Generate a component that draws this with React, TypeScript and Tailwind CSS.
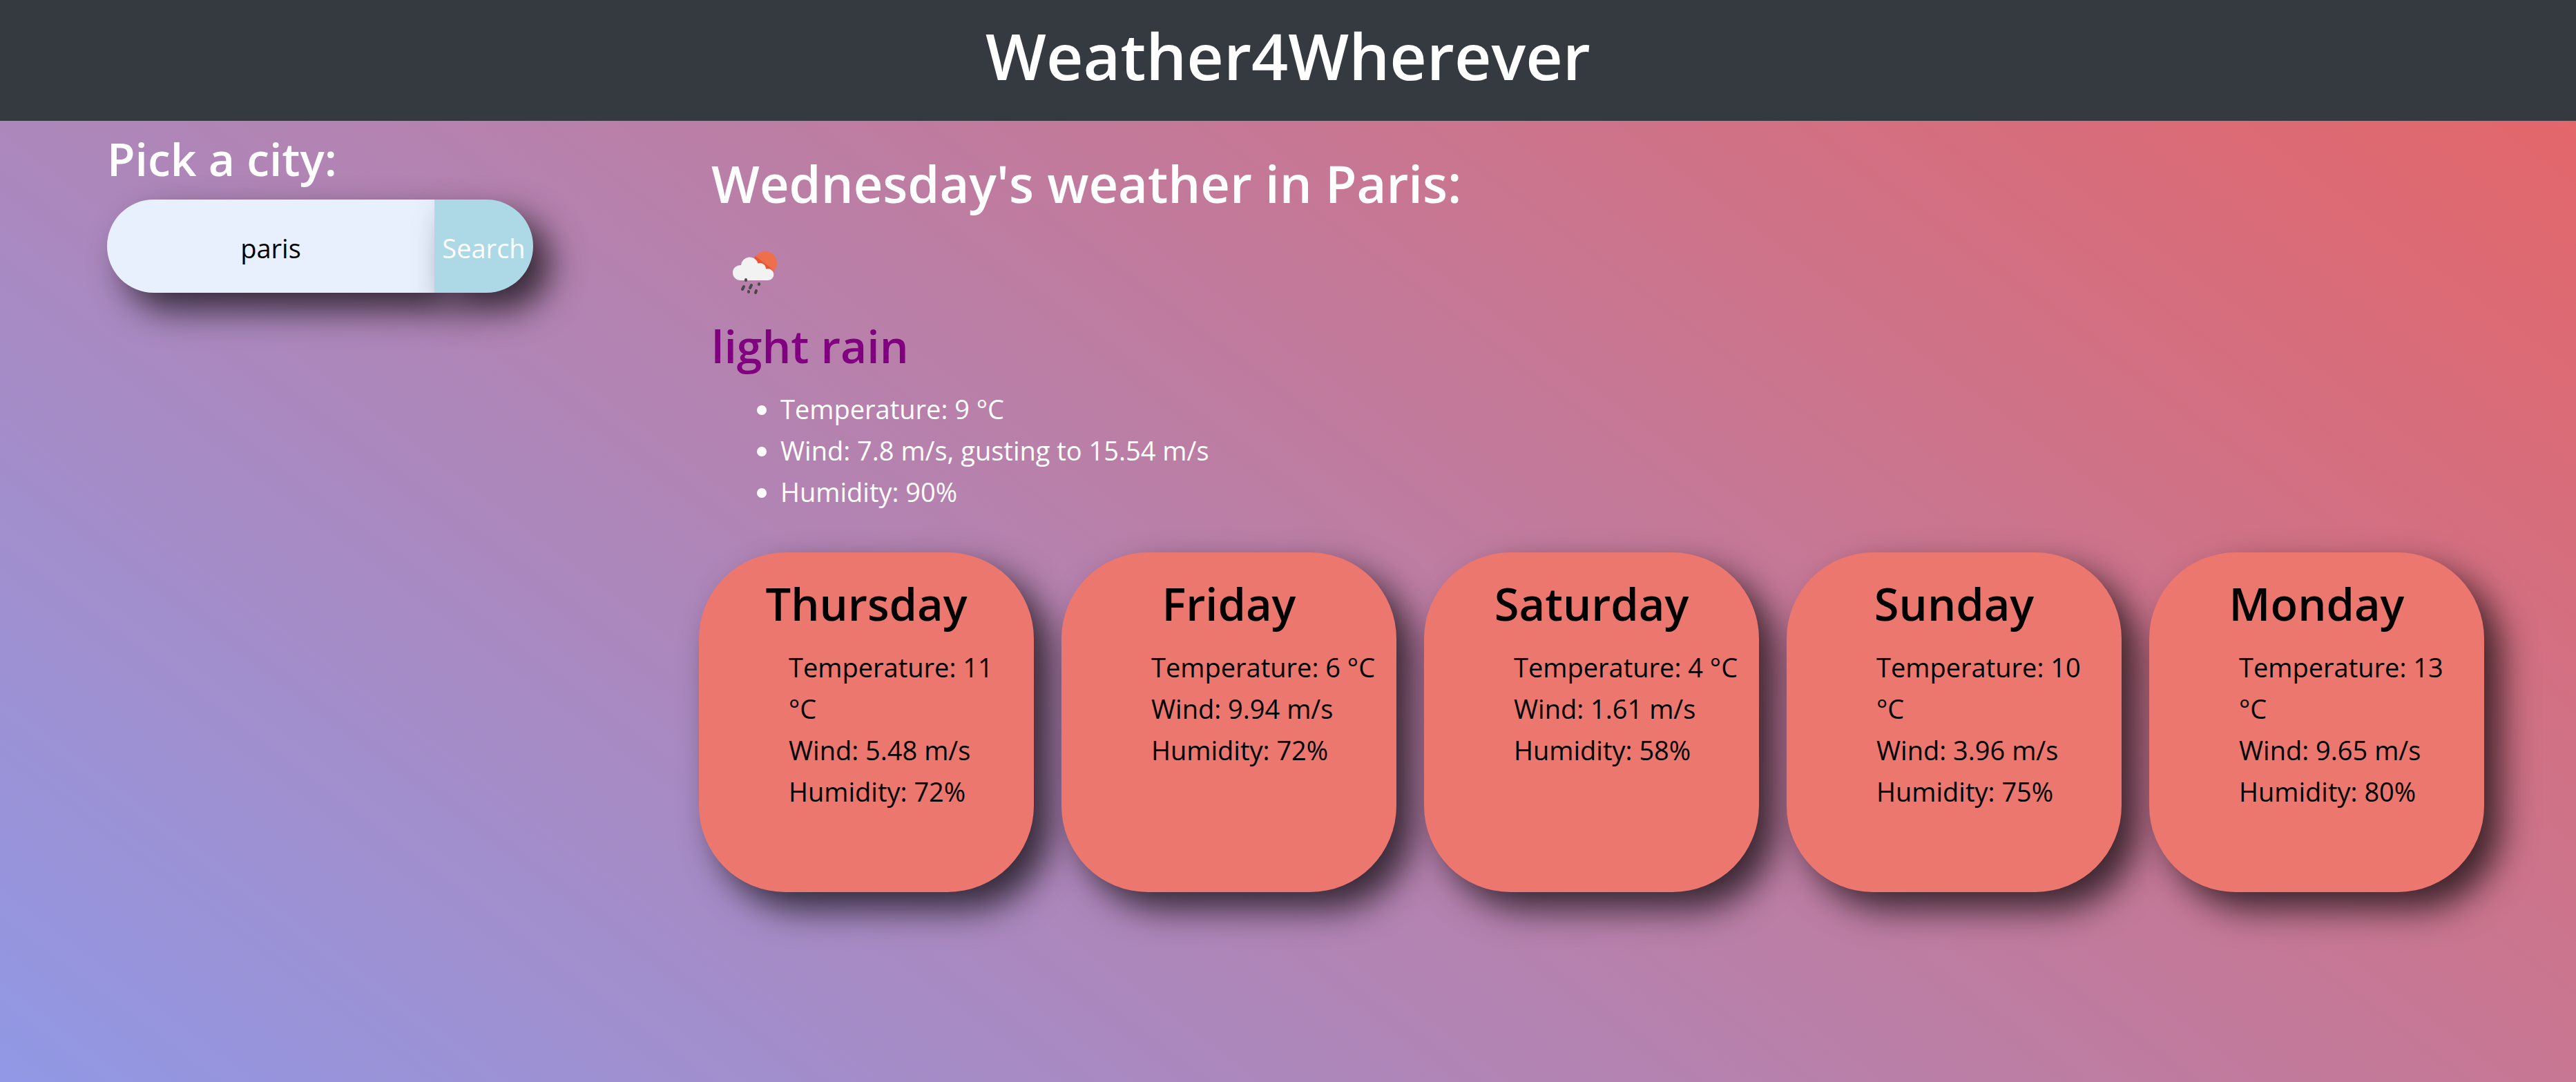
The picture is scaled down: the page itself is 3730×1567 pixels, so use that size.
import React from "react";

type Day = { name: string; temp: number; wind: string; humidity: number };

const days: Day[] = [
  { name: "Thursday", temp: 11, wind: "5.48", humidity: 72 },
  { name: "Friday", temp: 6, wind: "9.94", humidity: 72 },
  { name: "Saturday", temp: 4, wind: "1.61", humidity: 58 },
  { name: "Sunday", temp: 10, wind: "3.96", humidity: 75 },
  { name: "Monday", temp: 13, wind: "9.65", humidity: 80 },
];

function RainIcon() {
  return (
    <svg viewBox="0 0 100 100" className="block size-[100px]" role="img" aria-label="Rain">
      <circle cx="68" cy="41" r="17" fill="#ee6f4b" />
      <path d="M54 31a17 17 0 0 0 27 23l-7-8-10-7z" fill="#e9532f" />
      <path
        d="M31 66a11 11 0 0 1 2-22 12.500 12.500 0 0 1 24.500-2.500 8.500 8.500 0 0 1 11.500 8 8.500 8.500 0 1 1 3 16.500z"
        fill="#f2f2f2"
      />
      <g stroke="#4b484c" strokeWidth="4" strokeLinecap="round">
        <path d="M40 65v1M37 75l-2 4M48 73l-2 4M59 71v1M44 82v1M55 81l-1 3" />
      </g>
    </svg>
  );
}

function SearchForm() {
  return (
    <form className="flex flex-col" onSubmit={(e) => e.preventDefault()}>
      <label htmlFor="city" className="mb-[18px] text-[66px] leading-[84px] font-semibold">
        Pick a city:
      </label>
      <div className="flex h-[135px]">
        <input
          id="city"
          type="text"
          defaultValue="paris"
          className="min-w-0 flex-1 rounded-l-[75px] bg-[#e8f0fe] pt-1 text-center text-black shadow-[25px_25px_50px_rgba(0,0,0,0.7)] outline-none"
        />
        <button
          type="submit"
          className="w-[143px] rounded-r-[75px] bg-[#add8e6] pt-1 text-white shadow-[25px_25px_50px_rgba(0,0,0,0.7)]"
        >
          Search
        </button>
      </div>
    </form>
  );
}

function DayCard({ day }: { day: Day }) {
  return (
    <article className="min-h-[492px] flex-1 rounded-[125px] bg-[#eb776e] px-[30px] pt-8 text-black shadow-[25px_25px_50px_rgba(0,0,0,0.7)]">
      <h3 className="mb-5 text-center text-[65px] leading-[84px] font-semibold">{day.name}</h3>
      <ul className="pl-[100px]">
        <li>Temperature: {day.temp} °C</li>
        <li>Wind: {day.wind} m/s</li>
        <li>Humidity: {day.humidity}%</li>
      </ul>
    </article>
  );
}

export default function App() {
  return (
    <div className="min-h-screen bg-[linear-gradient(37deg,#9198e5,#e66465)] font-['Open_Sans','Noto_Sans',sans-serif] text-[38px] leading-[60px] text-white">
      <header className="bg-[#343a40] pt-5 pb-[35px]">
        <h1 className="text-center text-[93px] leading-[120px] font-semibold">Weather4Wherever</h1>
      </header>
      <div className="flex">
        <aside className="w-[772px] shrink-0 pt-3 pl-[155px]">
          <SearchForm />
        </aside>
        <main className="min-w-0 flex-1 pt-[43px] pr-[133px] pl-60">
          <section className="pl-[18px]">
            <h2 className="text-[74px] leading-[96px] font-semibold">Wednesday's weather in Paris:</h2>
            <div className="pt-[26px] pl-[10px]">
              <RainIcon />
            </div>
            <h3 className="mt-[18px] mb-5 text-[66px] leading-[84px] font-semibold text-[#800080]">light rain</h3>
            <ul className="list-disc pl-[100px]">
              <li>Temperature: 9 °C</li>
              <li>Wind: 7.8 m/s, gusting to 15.54 m/s</li>
              <li>Humidity: 90%</li>
            </ul>
          </section>
          <section className="mt-[58px] flex gap-10" aria-label="Forecast">
            {days.map((day) => (
              <DayCard key={day.name} day={day} />
            ))}
          </section>
        </main>
      </div>
    </div>
  );
}
